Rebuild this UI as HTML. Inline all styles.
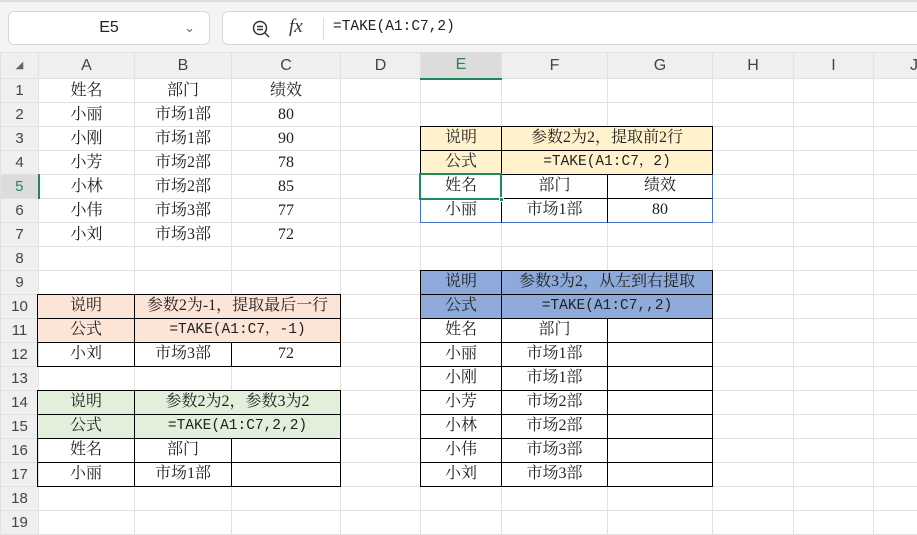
<!DOCTYPE html>
<html><head><meta charset="utf-8"><style>
*{margin:0;padding:0;box-sizing:border-box}
body{width:917px;height:524px;overflow:hidden;background:#fff;position:relative;font-family:"Liberation Serif","Noto Serif CJK SC",serif;font-size:16px;color:#222}
.top{position:absolute;left:0;top:0;width:917px;height:53px;background:#f4f4f4;border-top:2px solid #ddd}
.nb{position:absolute;left:8px;top:9px;width:202px;height:34px;background:#fff;border:1px solid #d8d8d8;border-radius:6px;font-family:"Liberation Sans",sans-serif;font-size:16px;line-height:32px;text-align:center}
.fb{position:absolute;left:222px;top:9px;width:710px;height:34px;background:#fff;border:1px solid #d8d8d8;border-radius:6px}
table.g{position:absolute;left:0;top:52px;width:954px;border-collapse:collapse;table-layout:fixed}
table.g td{border:1px solid #e1e1e1;height:24px;text-align:center;padding:0;white-space:nowrap;overflow:hidden;line-height:22px}
table.g tr.h td{height:26px;background:#efefef;font-family:"Liberation Sans",sans-serif;color:#444;font-size:16px}
table.g td.r{background:#efefef;font-family:"Liberation Sans",sans-serif;color:#444;font-size:15px}
.c{position:absolute;border:1px solid #000;text-align:center;line-height:22px;white-space:nowrap;overflow:hidden;height:25px}
.m{font-family:"Liberation Mono","Noto Serif CJK SC",monospace;font-size:14.5px}
.y{background:#fff2cc}.b{background:#8eaadb}.p{background:#fce4d6}.gr{background:#e2efda}
</style></head><body>
<div class="top">
<div class="nb">E5<span style="position:absolute;right:14px;top:0;color:#666;font-size:13px">&#8964;</span></div>
<div class="fb">
<svg style="position:absolute;left:28px;top:7px" width="20" height="20" viewBox="0 0 20 20"><circle cx="9" cy="9" r="6.5" fill="none" stroke="#333" stroke-width="1.5"/><path d="M6 7.5h6M6 10.5h6M14 14l4 4" stroke="#333" stroke-width="1.5"/></svg>
<span style="position:absolute;left:66px;top:4px;font-style:italic;font-size:19px;color:#333">fx</span>
<div style="position:absolute;left:100px;top:6px;width:1px;height:22px;background:#ddd"></div>
<span class="m" style="position:absolute;left:110px;top:7px">=TAKE(A1:C7,2)</span>
</div></div>
<table class="g">
<colgroup><col style="width:38px"><col style="width:96px"><col style="width:97px"><col style="width:109px"><col style="width:80px"><col style="width:81px"><col style="width:106px"><col style="width:105px"><col style="width:81px"><col style="width:80px"><col style="width:81px"></colgroup>
<tr class="h"><td style="font-size:10px;color:#666">&#9698;</td><td>A</td><td>B</td><td>C</td><td>D</td><td style="background:#dcdcdc;color:#1e8a5a;border-bottom:2px solid #1e8a5a">E</td><td>F</td><td>G</td><td>H</td><td>I</td><td>J</td></tr>
<tr><td class="r">1</td><td>姓名</td><td>部门</td><td>绩效</td><td></td><td></td><td></td><td></td><td></td><td></td><td></td></tr>
<tr><td class="r">2</td><td>小丽</td><td>市场1部</td><td>80</td><td></td><td></td><td></td><td></td><td></td><td></td><td></td></tr>
<tr><td class="r">3</td><td>小刚</td><td>市场1部</td><td>90</td><td></td><td></td><td></td><td></td><td></td><td></td><td></td></tr>
<tr><td class="r">4</td><td>小芳</td><td>市场2部</td><td>78</td><td></td><td></td><td></td><td></td><td></td><td></td><td></td></tr>
<tr><td class="r" style="background:#dcdcdc;color:#1e8a5a;border-right:2px solid #1e8a5a">5</td><td>小林</td><td>市场2部</td><td>85</td><td></td><td></td><td></td><td></td><td></td><td></td><td></td></tr>
<tr><td class="r">6</td><td>小伟</td><td>市场3部</td><td>77</td><td></td><td></td><td></td><td></td><td></td><td></td><td></td></tr>
<tr><td class="r">7</td><td>小刘</td><td>市场3部</td><td>72</td><td></td><td></td><td></td><td></td><td></td><td></td><td></td></tr>
<tr><td class="r">8</td><td></td><td></td><td></td><td></td><td></td><td></td><td></td><td></td><td></td><td></td></tr>
<tr><td class="r">9</td><td></td><td></td><td></td><td></td><td></td><td></td><td></td><td></td><td></td><td></td></tr>
<tr><td class="r">10</td><td></td><td></td><td></td><td></td><td></td><td></td><td></td><td></td><td></td><td></td></tr>
<tr><td class="r">11</td><td></td><td></td><td></td><td></td><td></td><td></td><td></td><td></td><td></td><td></td></tr>
<tr><td class="r">12</td><td></td><td></td><td></td><td></td><td></td><td></td><td></td><td></td><td></td><td></td></tr>
<tr><td class="r">13</td><td></td><td></td><td></td><td></td><td></td><td></td><td></td><td></td><td></td><td></td></tr>
<tr><td class="r">14</td><td></td><td></td><td></td><td></td><td></td><td></td><td></td><td></td><td></td><td></td></tr>
<tr><td class="r">15</td><td></td><td></td><td></td><td></td><td></td><td></td><td></td><td></td><td></td><td></td></tr>
<tr><td class="r">16</td><td></td><td></td><td></td><td></td><td></td><td></td><td></td><td></td><td></td><td></td></tr>
<tr><td class="r">17</td><td></td><td></td><td></td><td></td><td></td><td></td><td></td><td></td><td></td><td></td></tr>
<tr><td class="r">18</td><td></td><td></td><td></td><td></td><td></td><td></td><td></td><td></td><td></td><td></td></tr>
<tr><td class="r">19</td><td></td><td></td><td></td><td></td><td></td><td></td><td></td><td></td><td></td><td></td></tr>
</table>

<!-- E3:G6 -->
<div class="c y" style="left:420px;top:126px;width:82px">说明</div>
<div class="c y" style="left:501px;top:126px;width:212px">参数2为2，提取前2行</div>
<div class="c y" style="left:420px;top:150px;width:82px">公式</div>
<div class="c y m" style="left:501px;top:150px;width:212px">=TAKE(A1:C7，2)</div>
<div class="c" style="left:420px;top:174px;width:82px;border-color:#000 #000 #000 #4472c4">姓名</div>
<div class="c" style="left:501px;top:174px;width:107px">部门</div>
<div class="c" style="left:607px;top:174px;width:106px;border-right-color:#4472c4">绩效</div>
<div class="c" style="left:420px;top:198px;width:82px;border-left-color:#4472c4;border-bottom-color:#4472c4">小丽</div>
<div class="c" style="left:501px;top:198px;width:107px;border-bottom-color:#4472c4">市场1部</div>
<div class="c" style="left:607px;top:198px;width:106px;border-right-color:#4472c4;border-bottom-color:#4472c4">80</div>
<div style="position:absolute;left:419px;top:173px;width:83px;height:27px;border:2px solid #1e8a5a"></div>
<div style="position:absolute;left:499px;top:197px;width:5px;height:5px;background:#1e8a5a;border:1px solid #fff"></div>

<!-- E9:G17 -->
<div class="c b" style="left:420px;top:270px;width:82px">说明</div>
<div class="c b" style="left:501px;top:270px;width:212px">参数3为2，从左到右提取</div>
<div class="c b" style="left:420px;top:294px;width:82px">公式</div>
<div class="c b m" style="left:501px;top:294px;width:212px">=TAKE(A1:C7,,2)</div>
<div class="c" style="left:420px;top:318px;width:82px">姓名</div><div class="c" style="left:501px;top:318px;width:107px">部门</div><div class="c" style="left:607px;top:318px;width:106px"></div>
<div class="c" style="left:420px;top:342px;width:82px">小丽</div><div class="c" style="left:501px;top:342px;width:107px">市场1部</div><div class="c" style="left:607px;top:342px;width:106px"></div>
<div class="c" style="left:420px;top:366px;width:82px">小刚</div><div class="c" style="left:501px;top:366px;width:107px">市场1部</div><div class="c" style="left:607px;top:366px;width:106px"></div>
<div class="c" style="left:420px;top:390px;width:82px">小芳</div><div class="c" style="left:501px;top:390px;width:107px">市场2部</div><div class="c" style="left:607px;top:390px;width:106px"></div>
<div class="c" style="left:420px;top:414px;width:82px">小林</div><div class="c" style="left:501px;top:414px;width:107px">市场2部</div><div class="c" style="left:607px;top:414px;width:106px"></div>
<div class="c" style="left:420px;top:438px;width:82px">小伟</div><div class="c" style="left:501px;top:438px;width:107px">市场3部</div><div class="c" style="left:607px;top:438px;width:106px"></div>
<div class="c" style="left:420px;top:462px;width:82px">小刘</div><div class="c" style="left:501px;top:462px;width:107px">市场3部</div><div class="c" style="left:607px;top:462px;width:106px"></div>

<!-- A10:C12 -->
<div class="c p" style="left:37px;top:294px;width:98px">说明</div>
<div class="c p" style="left:134px;top:294px;width:207px">参数2为-1，提取最后一行</div>
<div class="c p" style="left:37px;top:318px;width:98px">公式</div>
<div class="c p m" style="left:134px;top:318px;width:207px">=TAKE(A1:C7，-1)</div>
<div class="c" style="left:37px;top:342px;width:98px">小刘</div><div class="c" style="left:134px;top:342px;width:98px">市场3部</div><div class="c" style="left:231px;top:342px;width:110px">72</div>

<!-- A14:C17 -->
<div class="c gr" style="left:37px;top:390px;width:98px">说明</div>
<div class="c gr" style="left:134px;top:390px;width:207px">参数2为2，参数3为2</div>
<div class="c gr" style="left:37px;top:414px;width:98px">公式</div>
<div class="c gr m" style="left:134px;top:414px;width:207px">=TAKE(A1:C7,2,2)</div>
<div class="c" style="left:37px;top:438px;width:98px">姓名</div><div class="c" style="left:134px;top:438px;width:98px">部门</div><div class="c" style="left:231px;top:438px;width:110px"></div>
<div class="c" style="left:37px;top:462px;width:98px">小丽</div><div class="c" style="left:134px;top:462px;width:98px">市场1部</div><div class="c" style="left:231px;top:462px;width:110px"></div>
</body></html>
